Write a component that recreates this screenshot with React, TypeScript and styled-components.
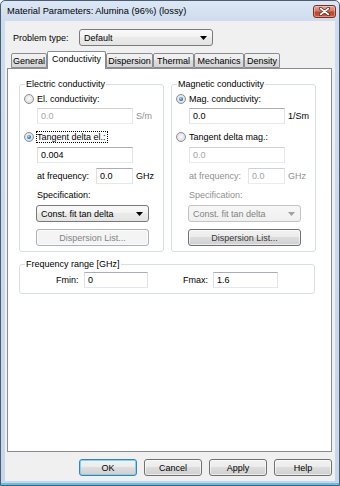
import React from "react";
import styled, { createGlobalStyle } from "styled-components";

const Global = createGlobalStyle`
  html, body { margin: 0; padding: 0; background: #ffffff; }
  body { font-family: "Liberation Sans", Arial, sans-serif; font-size: 9px; color: #000; }
  * { box-sizing: border-box; }
`;

const Window = styled.div`
  width: 340px;
  height: 486px;
  border: 1px solid #4c5d71;
  border-radius: 5px 5px 0 0;
  background: linear-gradient(180deg, #dce7f4 0px, #cddcee 20px, #c6d7eb 100%);
  padding: 0 4px 4px 4px;
  display: flex;
  flex-direction: column;
  box-shadow: inset 0 -2px 0 #5cc3e8;
`;

const TitleBar = styled.div`
  height: 20px;
  display: flex;
  align-items: center;
  justify-content: space-between;
  padding-left: 2px;
  margin-right: -1px;
`;

const TitleText = styled.span`
  font-size: 9.3px;
  color: #000;
`;

const CloseButton = styled.div`
  width: 23px;
  height: 13px;
  margin-top: 1px;
  border: 1px solid #7b2e21;
  border-radius: 3px;
  background: linear-gradient(180deg, #e5a594 0%, #d47a66 45%, #c0432b 55%, #c95a3f 100%);
  display: flex;
  align-items: center;
  justify-content: center;
  box-shadow: inset 0 0 0 1px rgba(255, 255, 255, 0.35);
`;

const Client = styled.div`
  flex: 1;
  background: #f0f0f0;
  display: flex;
  flex-direction: column;
`;

const TopRow = styled.div`
  display: flex;
  align-items: center;
  padding: 8px 0 0 8px;
`;

const RowLabel = styled.span`
  width: 66px;
`;

const Combo = styled.div<{ $w: number; $disabled?: boolean }>`
  width: ${(p) => p.$w}px;
  height: 17px;
  border: 1px solid ${(p) => (p.$disabled ? "#c3c3c3" : "#7a7a7a")};
  border-radius: 3px;
  background: ${(p) =>
    p.$disabled
      ? "linear-gradient(180deg, #f7f7f7, #efefef)"
      : "linear-gradient(180deg, #f9f9f9 0%, #f2f2f2 50%, #eaeaea 50%, #e4e4e4 100%)"};
  color: ${(p) => (p.$disabled ? "#838383" : "#000")};
  display: flex;
  align-items: center;
  justify-content: space-between;
  padding: 0 5px 0 4px;
  flex: none;
`;

const TabStrip = styled.div`
  display: flex;
  align-items: flex-end;
  height: 17px;
  margin: 5px 0 0 6px;
`;

const Tab = styled.div<{ $w: number; $active?: boolean }>`
  width: ${(p) => p.$w}px;
  height: ${(p) => (p.$active ? 18 : 15)}px;
  margin-bottom: ${(p) => (p.$active ? -1 : 0)}px;
  border: 1px solid #898c95;
  border-bottom: ${(p) => (p.$active ? "none" : "1px solid #898c95")};
  border-radius: 2px 2px 0 0;
  background: ${(p) =>
    p.$active
      ? "#ffffff"
      : "linear-gradient(180deg, #f3f3f3 0%, #ebebeb 50%, #dddddd 50%, #d5d5d5 100%)"};
  display: flex;
  align-items: ${(p) => (p.$active ? "flex-start" : "center")};
  padding-top: ${(p) => (p.$active ? 2 : 0)}px;
  justify-content: center;
  position: relative;
  z-index: ${(p) => (p.$active ? 1 : 0)};
  flex: none;
`;

const Panel = styled.div`
  margin: 0 3px 0 2px;
  height: 384px;
  border: 1px solid #898c95;
  background: #ffffff;
  padding: 9px 0 0 11px;
  display: flex;
  flex-direction: column;
`;

const GroupRow = styled.div`
  display: grid;
  grid-template-columns: 145px 145px;
  column-gap: 7px;
`;

const Group = styled.fieldset<{ $h: number }>`
  margin: 0;
  padding: 0 0 0 4px;
  height: ${(p) => p.$h}px;
  border: 1px solid #d5dfe5;
  border-radius: 3px;
  min-width: 0;
  display: flex;
  flex-direction: column;
`;

const Legend = styled.legend`
  margin-left: 1px;
  padding: 0 1px;
  line-height: 12px;
  font-size: 9px;
`;

const OptionRow = styled.div<{ $top: number }>`
  display: flex;
  align-items: center;
  gap: 3px;
  height: 14px;
  margin-top: ${(p) => p.$top}px;
`;

const Radio = styled.span<{ $checked?: boolean }>`
  width: 10px;
  height: 10px;
  border-radius: 50%;
  border: 1px solid #8e8f8f;
  background: radial-gradient(circle at 50% 45%, #fdfdfd 0%, #e4e4e4 55%, #cfcfcf 100%);
  position: relative;
  flex: none;
  &::after {
    content: "";
    position: absolute;
    inset: 2px;
    border-radius: 50%;
    display: ${(p) => (p.$checked ? "block" : "none")};
    background: radial-gradient(circle at 40% 35%, #a6e0fa 0%, #2c7dc4 55%, #0e3f7c 100%);
  }
`;

const OptionText = styled.span<{ $focus?: boolean; $disabled?: boolean }>`
  color: ${(p) => (p.$disabled ? "#8f8f8f" : "#000")};
  outline: ${(p) => (p.$focus ? "1px dotted #000" : "none")};
  outline-offset: 0px;
  padding: 0 1px 0 0;
`;

const FieldRow = styled.div<{ $top: number; $indent: number }>`
  display: flex;
  align-items: center;
  gap: 3px;
  margin-top: ${(p) => p.$top}px;
  margin-left: ${(p) => p.$indent}px;
`;

const TextBox = styled.input<{ $w: number; $disabled?: boolean }>`
  width: ${(p) => p.$w}px;
  height: 16px;
  margin: 0;
  padding: 0 3px;
  border: 1px solid;
  border-color: ${(p) =>
    p.$disabled ? "#cfd1d6 #e6e7eb #e9ecf0 #e2e4e8" : "#abadb3 #e2e3ea #e3e9ef #dbdfe6"};
  background: #ffffff;
  color: ${(p) => (p.$disabled ? "#a3a3a3" : "#000")};
  font-family: "Liberation Sans", Arial, sans-serif;
  font-size: 9px;
  outline: none;
  flex: none;
`;

const Unit = styled.span<{ $disabled?: boolean }>`
  color: ${(p) => (p.$disabled ? "#8f8f8f" : "#000")};
`;

const InlineLabel = styled.span<{ $w: number; $disabled?: boolean }>`
  width: ${(p) => p.$w}px;
  color: ${(p) => (p.$disabled ? "#8f8f8f" : "#000")};
  flex: none;
`;

const PlainLabel = styled.div<{ $top: number; $disabled?: boolean }>`
  height: 14px;
  line-height: 14px;
  margin: ${(p) => p.$top}px 0 0 13px;
  color: ${(p) => (p.$disabled ? "#8f8f8f" : "#000")};
`;

const Block = styled.div<{ $top: number }>`
  margin: ${(p) => p.$top}px 0 0 12px;
`;

const Button = styled.div<{ $w: number; $default?: boolean; $disabled?: boolean; $muted?: boolean }>`
  width: ${(p) => p.$w}px;
  height: 17px;
  border: 1px solid ${(p) => (p.$default ? "#3c7fb1" : p.$disabled ? "#adb2b5" : "#707070")};
  border-radius: 3px;
  background: ${(p) =>
    p.$disabled
      ? "#f4f4f4"
      : "linear-gradient(180deg, #f2f2f2 0%, #ebebeb 50%, #dddddd 50%, #cfcfcf 100%)"};
  box-shadow: ${(p) =>
    p.$default ? "inset 0 0 0 1px #7fd4f6" : "inset 0 0 0 1px rgba(255,255,255,0.6)"};
  color: ${(p) => (p.$disabled ? "#838383" : p.$muted ? "#3a3a3a" : "#000")};
  display: flex;
  align-items: center;
  justify-content: center;
  flex: none;
`;

const FreqGroup = styled.fieldset`
  margin: 6px 0 0 0;
  padding: 0 0 0 4px;
  width: 296px;
  height: 36px;
  border: 1px solid #d5dfe5;
  border-radius: 3px;
  min-width: 0;
`;

const FreqRow = styled.div`
  display: flex;
  align-items: center;
  margin-top: 2px;
  padding-left: 32px;
`;

const ButtonRow = styled.div`
  display: flex;
  justify-content: flex-end;
  gap: 7px;
  margin: 7px 3px 0 0;
`;

const Arrow = ({ color = "#000" }: { color?: string }) => (
  <svg width="7" height="4" viewBox="0 0 7 4">
    <path d="M0 0h7L3.5 4z" fill={color} />
  </svg>
);

const CloseGlyph = () => (
  <svg width="11" height="9" viewBox="0 0 11 9">
    <path
      d="M1.5 1.5L9.5 7.5M9.5 1.5L1.5 7.5"
      stroke="#5a1f14"
      strokeWidth="3"
      strokeLinecap="round"
    />
    <path
      d="M1.5 1.5L9.5 7.5M9.5 1.5L1.5 7.5"
      stroke="#ffffff"
      strokeWidth="1.6"
      strokeLinecap="round"
    />
  </svg>
);

const tabs = [
  { name: "General", w: 36 },
  { name: "Conductivity", w: 59, active: true },
  { name: "Dispersion", w: 47 },
  { name: "Thermal", w: 41 },
  { name: "Mechanics", w: 50 },
  { name: "Density", w: 36 },
];

export default function App() {
  return (
    <>
      <Global />
      <Window>
        <TitleBar>
          <TitleText>Material Parameters: Alumina (96%) (lossy)</TitleText>
          <CloseButton>
            <CloseGlyph />
          </CloseButton>
        </TitleBar>
        <Client>
          <TopRow>
            <RowLabel>Problem type:</RowLabel>
            <Combo $w={134}>
              <span>Default</span>
              <Arrow />
            </Combo>
          </TopRow>
          <TabStrip>
            {tabs.map((t) => (
              <Tab key={t.name} $w={t.w} $active={t.active}>
                {t.name}
              </Tab>
            ))}
          </TabStrip>
          <Panel>
            <GroupRow>
              <Group $h={174}>
                <Legend>Electric conductivity</Legend>
                <OptionRow $top={2}>
                  <Radio />
                  <OptionText>El. conductivity:</OptionText>
                </OptionRow>
                <FieldRow $top={2} $indent={13}>
                  <TextBox $w={96} $disabled readOnly value="0.0" />
                  <Unit $disabled>S/m</Unit>
                </FieldRow>
                <OptionRow $top={6}>
                  <Radio $checked />
                  <OptionText $focus>Tangent delta el.:</OptionText>
                </OptionRow>
                <FieldRow $top={3} $indent={13}>
                  <TextBox $w={96} readOnly value="0.004" />
                </FieldRow>
                <FieldRow $top={5} $indent={13}>
                  <InlineLabel $w={56}>at frequency:</InlineLabel>
                  <TextBox $w={37} readOnly value="0.0" />
                  <Unit>GHz</Unit>
                </FieldRow>
                <PlainLabel $top={4}>Specification:</PlainLabel>
                <Block $top={3}>
                  <Combo $w={113}>
                    <span>Const. fit tan delta</span>
                    <Arrow />
                  </Combo>
                </Block>
                <Block $top={7}>
                  <Button $w={113} $disabled>
                    Dispersion List...
                  </Button>
                </Block>
              </Group>
              <Group $h={174}>
                <Legend>Magnetic conductivity</Legend>
                <OptionRow $top={2}>
                  <Radio $checked />
                  <OptionText>Mag. conductivity:</OptionText>
                </OptionRow>
                <FieldRow $top={2} $indent={13}>
                  <TextBox $w={96} readOnly value="0.0" />
                  <Unit>1/Sm</Unit>
                </FieldRow>
                <OptionRow $top={6}>
                  <Radio />
                  <OptionText>Tangent delta mag.:</OptionText>
                </OptionRow>
                <FieldRow $top={3} $indent={13}>
                  <TextBox $w={96} $disabled readOnly value="0.0" />
                </FieldRow>
                <FieldRow $top={5} $indent={13}>
                  <InlineLabel $w={56} $disabled>
                    at frequency:
                  </InlineLabel>
                  <TextBox $w={37} $disabled readOnly value="0.0" />
                  <Unit $disabled>GHz</Unit>
                </FieldRow>
                <PlainLabel $top={4} $disabled>
                  Specification:
                </PlainLabel>
                <Block $top={3}>
                  <Combo $w={113} $disabled>
                    <span>Const. fit tan delta</span>
                    <Arrow color="#a0a0a0" />
                  </Combo>
                </Block>
                <Block $top={7}>
                  <Button $w={113} $muted>
                    Dispersion List...
                  </Button>
                </Block>
              </Group>
            </GroupRow>
            <FreqGroup>
              <Legend>Frequency range [GHz]</Legend>
              <FreqRow>
                <InlineLabel $w={28}>Fmin:</InlineLabel>
                <TextBox $w={64} readOnly value="0" />
                <InlineLabel $w={35} />
                <InlineLabel $w={30}>Fmax:</InlineLabel>
                <TextBox $w={65} readOnly value="1.6" />
              </FreqRow>
            </FreqGroup>
          </Panel>
          <ButtonRow>
            <Button $w={58} $default>
              OK
            </Button>
            <Button $w={58}>Cancel</Button>
            <Button $w={58}>Apply</Button>
            <Button $w={58}>Help</Button>
          </ButtonRow>
        </Client>
      </Window>
    </>
  );
}
